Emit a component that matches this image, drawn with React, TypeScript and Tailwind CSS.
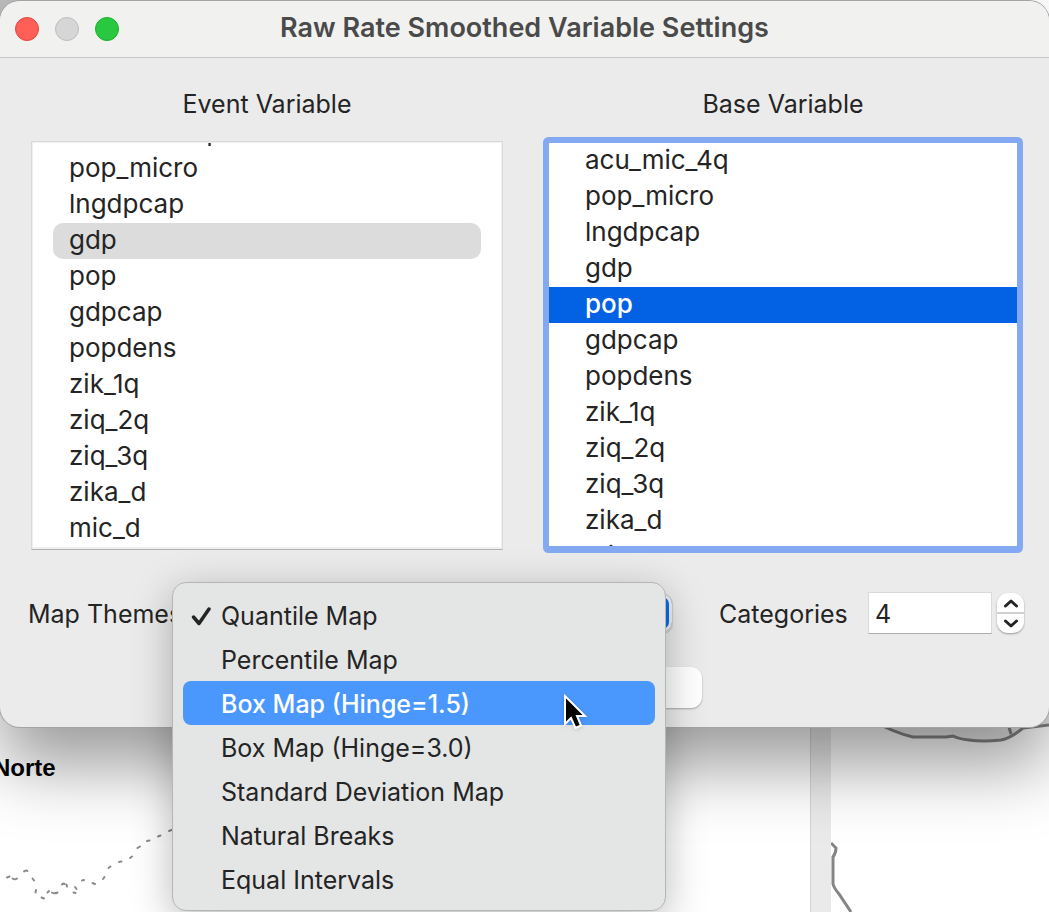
import { useState } from "react";

const variables = [
  "acu_mic_4q",
  "pop_micro",
  "lngdpcap",
  "gdp",
  "pop",
  "gdpcap",
  "popdens",
  "zik_1q",
  "ziq_2q",
  "ziq_3q",
  "zika_d",
  "mic_d",
];

const themes = [
  "Quantile Map",
  "Percentile Map",
  "Box Map (Hinge=1.5)",
  "Box Map (Hinge=3.0)",
  "Standard Deviation Map",
  "Natural Breaks",
  "Equal Intervals",
];

function MapBackdrop() {
  return (
    <div aria-hidden="true" className="absolute inset-0 flex bg-white">
      <div className="relative flex-1 overflow-hidden">
        <div className="h-10 bg-[#bdbdbd]" />
        <span className="absolute top-[754px] -left-[7px] font-['Liberation_Sans',sans-serif] text-2xl leading-7 font-bold text-black">
          Norte
        </span>
        <svg className="absolute top-[820px] left-0" width="180" height="92" viewBox="0 0 180 92" fill="none" stroke="#8a8a8a" strokeWidth="2" strokeLinecap="round">
          <path d="M7 57.500L9.500 56.500M12.500 58.500Q15 60 17 58.500M24 51.500Q26 50 27.500 51M32.500 58.500L34 60.500M36 70L35.500 72.500M41.500 77.500L44 78.500M49 71L47.500 72.500M52 72.500Q54.500 74 57.500 72.500M62 64.500Q63.500 63 64.500 64M66.500 64.500L67 66.500M75 67L76.500 69M73.500 72.500L75.500 73M82 60.500L84 60M92.500 63L95 64M104.500 57L103 59M108.500 48L110.500 46.500M119 42L121.500 41.500M130 38L132 36.500M137.500 28L140 26.500M147 21L149.500 20.500M158 16.500L160.500 15.500M169 11L171.500 10" />
        </svg>
      </div>
      <div className="w-[21px] border-l border-[#d4d4d4] bg-[#eaeaea]" />
      <div className="relative w-[218px] overflow-hidden">
        <svg className="absolute top-[712px] left-0" width="218" height="200" viewBox="0 0 218 200" fill="none" stroke="#858585" strokeWidth="3">
          <path d="M40 8Q64 21 82 25L115 25L122 24Q128 27 138 28Q152 30 170 28Q180 26 192 16L218 13V0H40Z" fill="#ececec" stroke="none" />
          <path d="M40 8Q64 21 82 25L115 25L122 24Q128 27 138 28Q152 30 170 28Q180 26 192 16L218 13" />
          <path d="M176 8L180 22" />
          <path d="M0 131L5 136Q5 141 2 145L2 172Q3 176 8 182L20 200" />
        </svg>
      </div>
    </div>
  );
}

function VariableList({
  id,
  title,
  focused,
  value,
  onChange,
}: {
  id: string;
  title: string;
  focused: boolean;
  value: string;
  onChange: (v: string) => void;
}) {
  return (
    <section className="flex min-w-0 flex-1 flex-col">
      <h2 id={id} className="flex h-[83px] items-center justify-center pt-2 leading-8">
        {title}
      </h2>
      <div
        className={
          focused
            ? "rounded-xs bg-[#83a9f2] px-0.5 pt-0.5 pb-[3px] ring-4 ring-[#83a9f2]"
            : "border border-[#d9d9d9] border-b-[#b0b0b0] bg-[#f0f0f0] px-px pt-px pb-0.5"
        }
      >
        <div
          role="listbox"
          aria-labelledby={id}
          className={`flex flex-col overflow-hidden bg-white text-[26px] ${focused ? "h-[403px]" : "h-[404px] justify-end px-5"}`}
        >
          {variables.map((name) => {
            const selected = name === value;
            const tone = selected
              ? focused
                ? "bg-[#0262e3] text-white font-medium"
                : "rounded-[10px] bg-[#dcdcdc]"
              : "";
            return (
              <button
                key={name}
                type="button"
                role="option"
                aria-selected={selected}
                onClick={() => onChange(name)}
                className={`flex h-9 shrink-0 items-start text-left leading-[34px] ${focused ? "pl-9" : "pl-4"} ${tone}`}
              >
                {name}
              </button>
            );
          })}
        </div>
      </div>
    </section>
  );
}

function ThemeMenu({ checked, onPick }: { checked: string; onPick: (v: string) => void }) {
  const [active, setActive] = useState(themes[2]);
  return (
    <div
      role="menu"
      aria-label="Map Themes"
      className="absolute -top-[11px] right-[7px] -left-[13px] z-10 flex flex-col rounded-[14px] border border-[#b4b5b5] bg-[#e4e6e5] px-[10px] pt-[10px] pb-[9px] shadow-[0_10px_40px_rgba(0,0,0,0.28)]"
    >
      {themes.map((name) => (
        <button
          key={name}
          type="button"
          role="menuitemradio"
          aria-checked={name === checked}
          onMouseEnter={() => setActive(name)}
          onClick={() => onPick(name)}
          className={`flex h-11 items-center rounded-lg pt-1 pl-2 text-left whitespace-nowrap ${
            name === active ? "bg-[#4a97fe] font-medium text-white" : ""
          }`}
        >
          <span className="w-[30px]">
            {name === checked && (
              <svg width="20" height="20" viewBox="0 0 20 20" fill="none" stroke="currentColor" strokeWidth="3.500" strokeLinecap="round" strokeLinejoin="round">
                <path d="M2.500 10L8 16.500L18 2" />
              </svg>
            )}
          </span>
          {name}
        </button>
      ))}
      <svg className="pointer-events-none absolute top-[111px] left-[390px] drop-shadow-sm" width="28" height="38" viewBox="0 0 28 38">
        <path d="M2 2V30L8 24L12.500 34L18 31.500L14 22H22Z" fill="#000" stroke="#fff" strokeWidth="2" />
      </svg>
    </div>
  );
}

export default function App() {
  const [eventVar, setEventVar] = useState("gdp");
  const [baseVar, setBaseVar] = useState("pop");
  const [theme, setTheme] = useState(themes[0]);
  const [categories, setCategories] = useState(4);

  return (
    <div className="relative min-h-screen overflow-hidden bg-white pt-px font-[Inter,sans-serif] text-[25px] text-[#242424]">
      <MapBackdrop />
      <main className="relative rounded-[20px] bg-[#ebebeb] pb-[19px] shadow-[0_0_0_1px_#a4a4a4,0_38px_70px_rgba(0,0,0,0.4)]">
        <header className="flex h-[57px] items-center rounded-t-[20px] border-b border-[#c6c6c4] bg-[#f1f1f0] px-[15px]">
          <div className="flex flex-1 gap-4">
            <button type="button" aria-label="Close window" className="size-6 rounded-full border border-[#e2463f] bg-[#ff5f57]" />
            <button type="button" aria-label="Minimize" className="size-6 rounded-full border border-[#bdbdbd] bg-[#d6d6d6]" />
            <button type="button" aria-label="Zoom" className="size-6 rounded-full border border-[#1dad2b] bg-[#28c840]" />
          </div>
          <h1 className="pb-0.5 text-[27px] font-semibold text-[#4a4a4a]">Raw Rate Smoothed Variable Settings</h1>
          <div className="flex-1" />
        </header>

        <div className="flex items-start gap-[44px] pr-[30px] pl-[31px]">
          <VariableList id="event" title="Event Variable" focused={false} value={eventVar} onChange={setEventVar} />
          <VariableList id="base" title="Base Variable" focused value={baseVar} onChange={setBaseVar} />
        </div>

        <div className="mt-[42px] flex items-center pr-[25px] pl-7">
          <label htmlFor="theme" className="w-[157px] pt-1 whitespace-nowrap">
            Map Themes
          </label>
          <div className="relative flex-1">
            <select
              id="theme"
              value={theme}
              onChange={(e) => setTheme(e.target.value)}
              className="block h-10 w-full appearance-none rounded-[11px] border border-[#d0d0d0] bg-linear-to-r from-white from-90% to-[#0a6cf0] to-90% bg-clip-padding pl-4 shadow-[inset_0_0_0_3px_#f0f0f0,0_1px_1px_rgba(0,0,0,0.2)]"
            >
              {themes.map((name) => (
                <option key={name}>{name}</option>
              ))}
            </select>
            <ThemeMenu checked={theme} onPick={setTheme} />
          </div>
          <label htmlFor="categories" className="ml-[46px] w-[149px] pt-1">
            Categories
          </label>
          <input
            id="categories"
            type="text"
            inputMode="numeric"
            value={categories}
            onChange={(e) => setCategories(Number(e.target.value) || 0)}
            className="h-[42px] w-[124px] border border-[#d9d9d9] border-b-[#adadad] bg-white pt-0.5 pl-1.5"
          />
          <div className="ml-[5px] flex h-10 w-[27px] flex-col divide-y-2 divide-[#d0d0d0] overflow-hidden rounded-[11px] bg-white shadow-[0_1px_2px_rgba(0,0,0,0.35)]">
            <button type="button" aria-label="Increase" onClick={() => setCategories(categories + 1)} className="flex flex-1 items-center justify-center">
              <svg width="16" height="10" viewBox="0 0 16 10" fill="none" stroke="currentColor" strokeWidth="3" strokeLinecap="round" strokeLinejoin="round">
                <path d="M2.500 8L8 3L13.500 8" />
              </svg>
            </button>
            <button type="button" aria-label="Decrease" onClick={() => setCategories(categories - 1)} className="flex flex-1 items-center justify-center">
              <svg width="16" height="10" viewBox="0 0 16 10" fill="none" stroke="currentColor" strokeWidth="3" strokeLinecap="round" strokeLinejoin="round">
                <path d="M2.500 2L8 7L13.500 2" />
              </svg>
            </button>
          </div>
        </div>

        <div className="mt-[33px] flex justify-center gap-[11px]">
          <button type="button" aria-label="OK" className="h-[41px] w-[172px] rounded-[11px] bg-white shadow-[0_1px_2px_rgba(0,0,0,0.3)]" />
          <button type="button" aria-label="Close" className="h-[41px] w-[172px] rounded-[11px] bg-white shadow-[0_1px_2px_rgba(0,0,0,0.3)]" />
        </div>
      </main>
    </div>
  );
}
